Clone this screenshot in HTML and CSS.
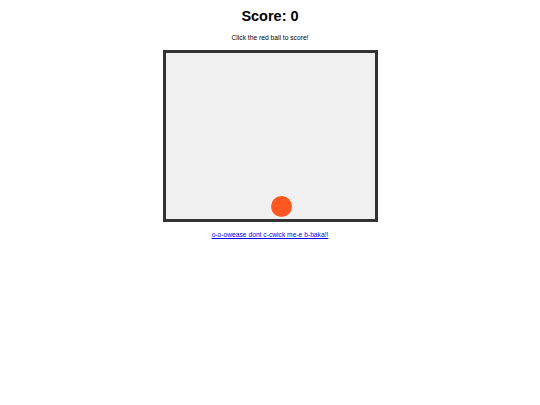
FILE: index.html
```html
<!DOCTYPE html>
<html>
<head>
<meta charset="utf-8">
<link rel="stylesheet" href="styles.css">
</head>
<body>
<div class="page">
  <h1 class="score">Score: 0</h1>
  <p class="hint">Click the red ball to score!</p>
  <div class="game">
    <div class="ball"></div>
  </div>
  <a class="link" href="#">o-o-owease dont c-cwick me-e b-baka!!</a>
</div>
</body>
</html>
```
FILE: styles.css
```css
html, body {
  margin: 0;
  padding: 0;
  background: #ffffff;
}
.page {
  display: flex;
  flex-direction: column;
  align-items: center;
  font-family: "Liberation Sans", Arial, sans-serif;
  color: #000;
}
.score {
  margin: 7px 0 0;
  font-size: 14.5px;
  line-height: 18px;
  font-weight: bold;
}
.hint {
  margin: 8px 0 8px;
  font-size: 6.7px;
  line-height: 9px;
}
.game {
  position: relative;
  box-sizing: border-box;
  width: 215px;
  height: 172px;
  margin-left: 1px;
  border: 3px solid #333333;
  background: #f0f0f0;
}
.ball {
  position: absolute;
  left: 105px;
  top: 143px;
  width: 21px;
  height: 21px;
  border-radius: 50%;
  background: #ff5722;
}
.link {
  margin-top: 7.5px;
  font-size: 6.7px;
  line-height: 9px;
  color: #0000ee;
  text-decoration: underline;
}
```
